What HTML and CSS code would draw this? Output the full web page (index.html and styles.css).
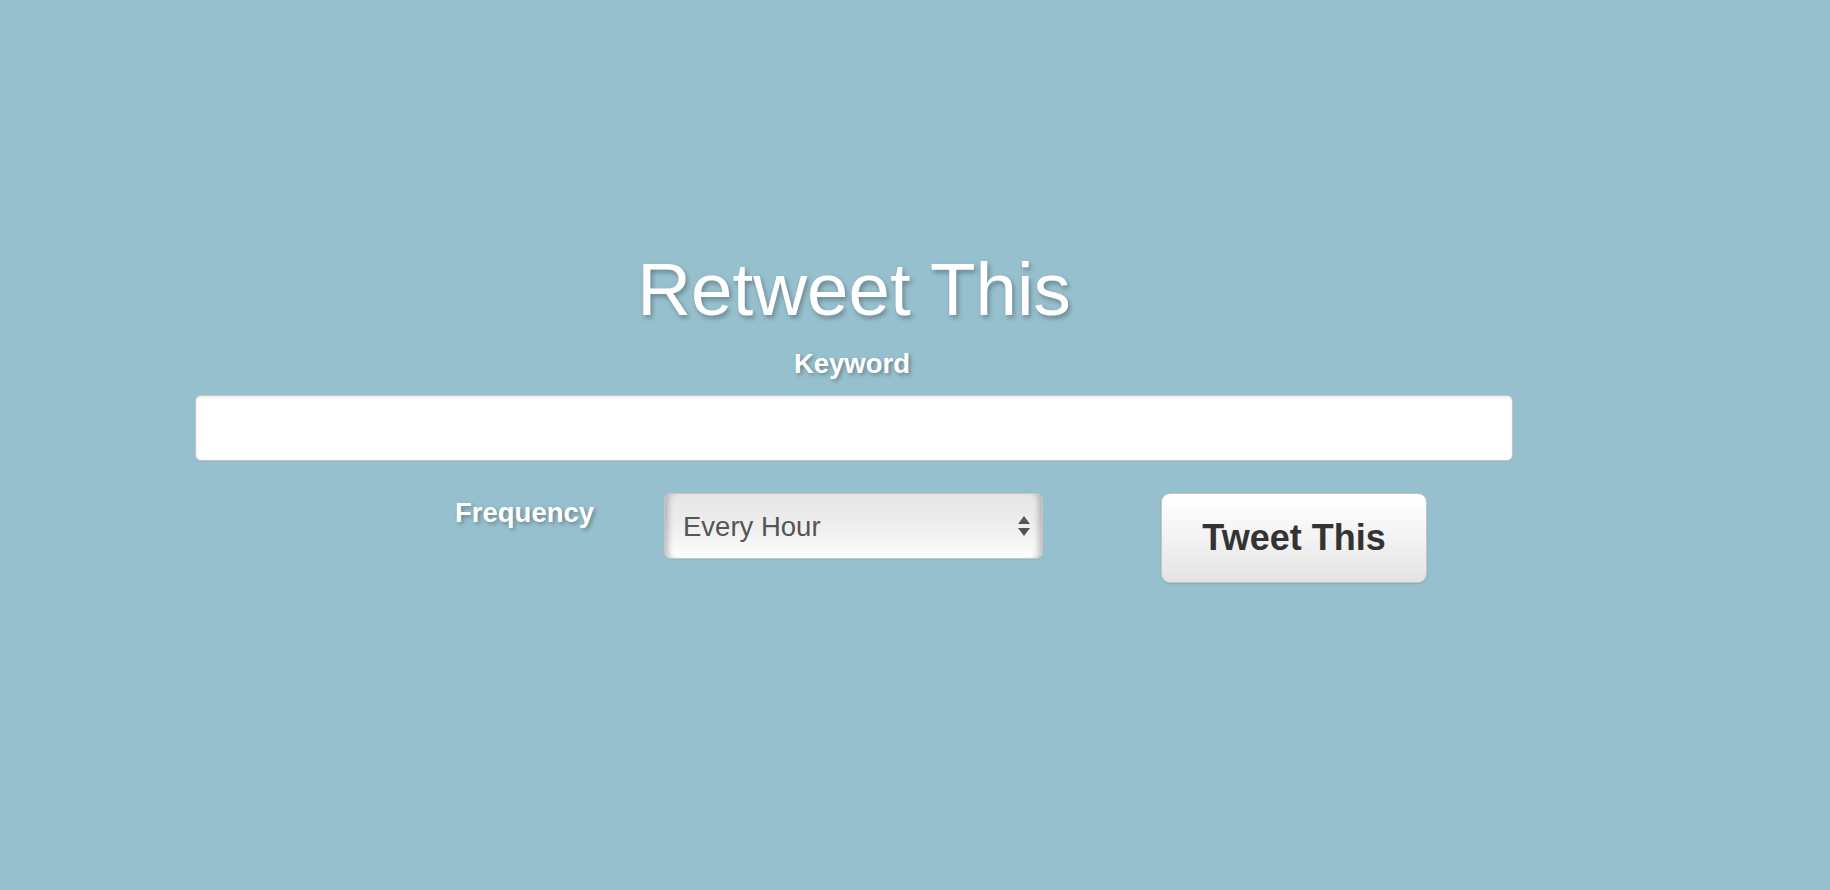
FILE: index.html
```html
<!DOCTYPE html>
<html lang="en">
<head>
<meta charset="utf-8">
<title>Retweet This</title>
<link rel="stylesheet" href="styles.css">
</head>
<body>
<main class="page">
  <form class="form">
    <h1 class="title">Retweet This</h1>
    <label class="label label-center" for="keyword">Keyword</label>
    <input class="text-input" id="keyword" type="text">
    <div class="row">
      <label class="label label-freq" for="freq">Frequency</label>
      <div class="select-wrap">
        <select class="select" id="freq">
          <option>Every Hour</option>
          <option>Every Day</option>
          <option>Every Week</option>
        </select>
        <svg class="select-arrows" width="12" height="21" viewBox="0 0 12 21" aria-hidden="true">
          <path d="M6 0 L12 8 L0 8 Z" fill="#555"/>
          <path d="M0 12 L12 12 L6 20 Z" fill="#555"/>
        </svg>
      </div>
      <button class="btn" type="button">Tweet This</button>
    </div>
  </form>
</main>
</body>
</html>
```

FILE: styles.css
```css
html, body {
  margin: 0;
  padding: 0;
}

body {
  background: #97c0ce;
  font-family: "Liberation Sans", Arial, Helvetica, sans-serif;
  min-height: 890px;
}

.page {
  padding-top: 250px;
  padding-left: 195px;
}

.form {
  width: 1318px;
  display: flex;
  flex-direction: column;
}

.title {
  margin: 0;
  font-size: 74.5px;
  line-height: 80px;
  font-weight: normal;
  color: #fff;
  text-align: center;
  text-shadow: 2px 3px 5px rgba(0, 0, 0, 0.3);
}

.label {
  font-size: 27.5px;
  line-height: 30px;
  font-weight: bold;
  color: #fff;
  text-shadow: 2px 2px 4px rgba(0, 0, 0, 0.32);
}

.label-center {
  margin-top: 19px;
  text-align: center;
  padding-right: 4px;
}

.text-input {
  margin-top: 16px;
  box-sizing: border-box;
  width: 1318px;
  height: 66px;
  border: 1px solid #c4c4c4;
  border-radius: 6px;
  background: #fff;
  box-shadow: inset 0 2px 3px rgba(0, 0, 0, 0.07), 0 1px 0 rgba(0, 0, 0, 0.04);
  font-family: inherit;
  font-size: 26px;
  padding: 0 16px;
  outline: none;
}

.row {
  margin-top: 32px;
  display: flex;
  align-items: flex-start;
  padding-left: 260px;
}

.label-freq {
  width: 209px;
  flex: none;
  margin-top: 5px;
}

.select-wrap {
  position: relative;
  flex: none;
  width: 379px;
  height: 66px;
  margin-right: 118px;
}

.select {
  -webkit-appearance: none;
  appearance: none;
  box-sizing: border-box;
  width: 100%;
  height: 66px;
  margin: 0;
  border: 1px solid #c6c6c6;
  border-radius: 7px;
  padding: 0 40px 0 18px;
  font-family: inherit;
  font-size: 27.5px;
  color: #555;
  background: linear-gradient(to bottom, #e6e6e6 0%, #ececec 40%, #fdfdfd 100%);
  box-shadow:
    inset 8px 0 6px -5px rgba(0, 0, 0, 0.25),
    inset -8px 0 6px -5px rgba(0, 0, 0, 0.25),
    0 1px 1px rgba(0, 0, 0, 0.05);
  outline: none;
}

.select-arrows {
  position: absolute;
  left: 354px;
  top: 23px;
  pointer-events: none;
}

.btn {
  flex: none;
  box-sizing: border-box;
  width: 266px;
  height: 90px;
  margin: 0;
  padding: 0;
  border: 1px solid #c4c4c4;
  border-radius: 9px;
  background: linear-gradient(to bottom, #ffffff 0%, #f3f3f3 50%, #e3e3e3 100%);
  box-shadow: 0 1px 2px rgba(0, 0, 0, 0.12);
  font-family: inherit;
  font-size: 36px;
  font-weight: bold;
  color: #333;
  cursor: pointer;
}
```
